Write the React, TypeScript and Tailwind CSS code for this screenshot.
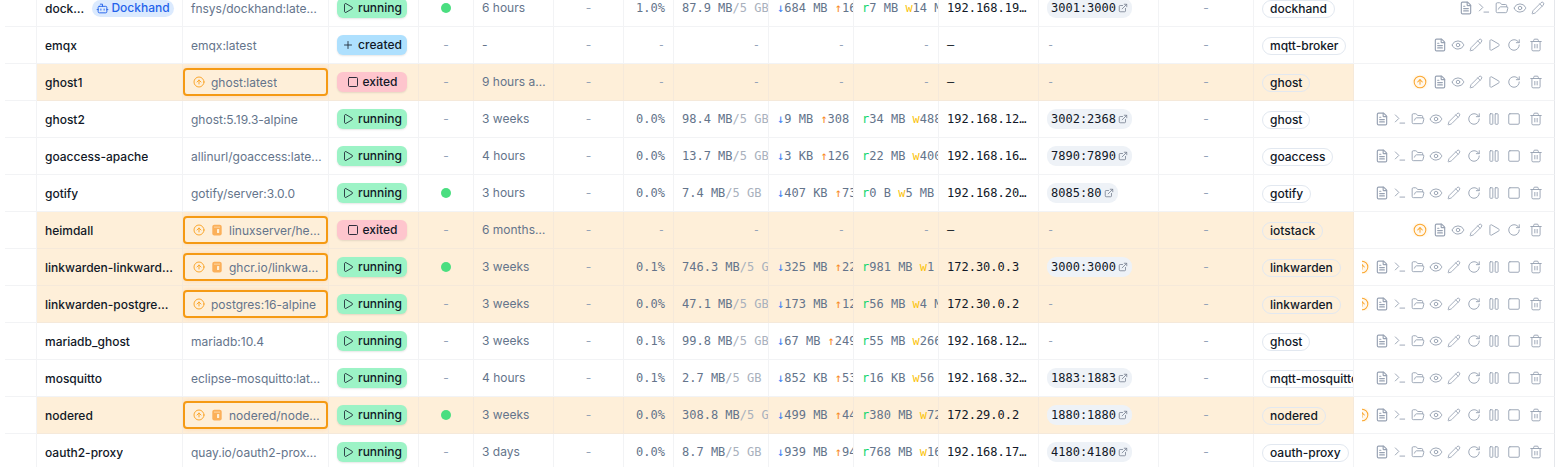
import { FileText, Terminal, FolderOpen, Eye, Pencil, RotateCw, Pause, Square, Trash2, Play, CircleArrowUp, ExternalLink, Plus, Bot } from "lucide-react";
import React from "react";

type Row = {
  name: string; dock?: boolean; image: string; update?: boolean; pin?: boolean; state: "running" | "created" | "exited";
  health?: boolean; uptime: string; cpu: string; mem?: string; down?: string; up?: string; r?: string; w?: string; ip: string; port?: string; stack: string; hl?: boolean;
};

const rows: Row[] = [
  { name: "dockhand", dock: true, image: "fnsys/dockhand:latest-amd64", state: "running", health: true, uptime: "6 hours", cpu: "1.0%", mem: "87.9 MB", down: "684 MB", up: "16 MB", r: "7 MB", w: "14 MB", ip: "192.168.192.2", port: "3001:3000", stack: "dockhand" },
  { name: "emqx", image: "emqx:latest", state: "created", uptime: "-", cpu: "-", ip: "—", stack: "mqtt-broker" },
  { name: "ghost1", image: "ghost:latest", update: true, state: "exited", uptime: "9 hours ago", cpu: "-", ip: "—", stack: "ghost", hl: true },
  { name: "ghost2", image: "ghost:5.19.3-alpine", state: "running", uptime: "3 weeks", cpu: "0.0%", mem: "98.4 MB", down: "9 MB", up: "308 MB", r: "34 MB", w: "488 MB", ip: "192.168.128.3", port: "3002:2368", stack: "ghost" },
  { name: "goaccess-apache", image: "allinurl/goaccess:latest-amd64", state: "running", uptime: "4 hours", cpu: "0.0%", mem: "13.7 MB", down: "3 KB", up: "126 B", r: "22 MB", w: "400 KB", ip: "192.168.160.2", port: "7890:7890", stack: "goaccess" },
  { name: "gotify", image: "gotify/server:3.0.0", state: "running", health: true, uptime: "3 hours", cpu: "0.0%", mem: "7.4 MB", down: "407 KB", up: "73 KB", r: "0 B", w: "5 MB", ip: "192.168.208.2", port: "8085:80", stack: "gotify" },
  { name: "heimdall", image: "linuxserver/heimdall:latest", update: true, pin: true, state: "exited", uptime: "6 months ago", cpu: "-", ip: "—", stack: "iotstack", hl: true },
  { name: "linkwarden-linkwarden-1", image: "ghcr.io/linkwarden/linkwarden", update: true, pin: true, state: "running", health: true, uptime: "3 weeks", cpu: "0.1%", mem: "746.3 MB", down: "325 MB", up: "22 MB", r: "981 MB", w: "1 GB", ip: "172.30.0.3", port: "3000:3000", stack: "linkwarden", hl: true },
  { name: "linkwarden-postgres-db-1", image: "postgres:16-alpine", update: true, state: "running", uptime: "3 weeks", cpu: "0.0%", mem: "47.1 MB", down: "173 MB", up: "12 MB", r: "56 MB", w: "4 MB", ip: "172.30.0.2", stack: "linkwarden", hl: true },
  { name: "mariadb_ghost", image: "mariadb:10.4", state: "running", uptime: "3 weeks", cpu: "0.1%", mem: "99.8 MB", down: "67 MB", up: "249 MB", r: "55 MB", w: "266 MB", ip: "192.168.128.2", stack: "ghost" },
  { name: "mosquitto", image: "eclipse-mosquitto:latest", state: "running", uptime: "4 hours", cpu: "0.1%", mem: "2.7 MB", down: "852 KB", up: "53 KB", r: "16 KB", w: "56 KB", ip: "192.168.32.2", port: "1883:1883", stack: "mqtt-mosquitto" },
  { name: "nodered", image: "nodered/node-red:latest", update: true, pin: true, state: "running", health: true, uptime: "3 weeks", cpu: "0.0%", mem: "308.8 MB", down: "499 MB", up: "44 MB", r: "380 MB", w: "72 MB", ip: "172.29.0.2", port: "1880:1880", stack: "nodered", hl: true },
  { name: "oauth2-proxy", image: "quay.io/oauth2-proxy/oauth2-proxy", state: "running", uptime: "3 days", cpu: "0.0%", mem: "8.7 MB", down: "939 MB", up: "94 MB", r: "768 MB", w: "16 MB", ip: "192.168.176.2", port: "4180:4180", stack: "oauth-proxy" },
];

const mono = "font-['DejaVu_Sans_Mono',monospace]";
const base = "border-b border-r align-middle p-0 overflow-hidden whitespace-nowrap";
const Dash = ({ right }: { right?: boolean }) => (
  <span className={`block text-[#94a3b8] text-xs ${right ? "text-right pr-2" : "text-center"}`}>-</span>
);

function StateBadge({ state }: { state: Row["state"] }) {
  const cfg = {
    running: { bg: "bg-[#9cf3c6]", icon: <Play className="w-3 h-3 text-[#1f2937]" strokeWidth={1.75} /> },
    created: { bg: "bg-[#aee0fe]", icon: <Plus className="w-3 h-3 text-[#1f2937]" strokeWidth={1.75} /> },
    exited: { bg: "bg-[#fec5cd]", icon: <Square className="w-3 h-3 text-[#111827]" strokeWidth={1.75} /> },
  }[state];
  return (
    <span className={`flex items-center justify-center gap-1 w-[70px] h-5 rounded-md shadow-[0_1px_2px_rgba(0,0,0,0.1)] text-xs font-medium text-[#111827] ${cfg.bg}`}>
      {cfg.icon}
      {state}
    </span>
  );
}

function PinIcon() {
  return (
    <svg viewBox="0 0 12 12" className="w-3 h-3 shrink-0">
      <rect x="1.3" y="0.8" width="9.4" height="10.8" rx="2" fill="#fbb05a" />
      <rect x="3" y="2.6" width="6" height="1" fill="#fdd8a6" />
      <rect x="6" y="5" width="2.2" height="4" rx="0.5" fill="#fef0da" />
    </svg>
  );
}

function Actions({ row }: { row: Row }) {
  const cls = "w-3.5 h-3.5 shrink-0";
  const sw = 1.6;
  const running = row.state === "running";
  return (
    <div className={`flex items-center justify-end gap-1 ml-2 overflow-hidden text-[#98a2b3] ${row.dock ? "pr-[9px]" : "pr-[11px]"}`}>
      {row.update && (
        <span className="flex mr-[2px] rounded-full bg-[#fff8ee] shadow-[0_0_4px_#fff3e0]">
          <CircleArrowUp className={`${cls} text-[#fba72e]`} strokeWidth={1.75} />
        </span>
      )}
      <FileText className={cls} strokeWidth={2} />
      {running && <Terminal className={cls} strokeWidth={sw} />}
      {running && <FolderOpen className={cls} strokeWidth={sw} />}
      <Eye className={cls} strokeWidth={sw} />
      <Pencil className={cls} strokeWidth={1.5} />
      {!row.dock && !running && <Play className={cls} strokeWidth={sw} />}
      {!row.dock && <RotateCw className={`${cls} ml-[2px]`} strokeWidth={sw} />}
      {!row.dock && running && <Pause className={`${cls} ml-[2px]`} strokeWidth={sw} />}
      {!row.dock && running && <Square className={`${cls} ml-[2px]`} strokeWidth={sw} />}
      {!row.dock && <Trash2 className={`${cls} ml-1`} strokeWidth={sw} />}
    </div>
  );
}

function TableRow({ row }: { row: Row }) {
  const bg = row.hl ? "bg-[#feefd9] border-[#f5e9da]" : "bg-white border-[#f2f3f5]";
  const cell = `${base} ${bg}`;
  return (
    <tr className="h-[37px]">
      <td className={`${base} bg-white border-[#f2f3f5]`} />
      <td className={`${cell} pl-2 text-xs font-medium text-[#111827]`}>
        <div className="flex items-center gap-2 pr-2">
          <span className={`truncate pt-[2px] ${row.dock ? "w-[41px] shrink-0" : ""}`}>{row.name}</span>
          {row.dock && (
            <span className="flex items-center justify-center gap-[2px] w-[82px] shrink-0 h-[17px] -ml-[2px] rounded-full bg-[#dbeafe] text-[#2563eb]">
              <Bot className="w-[13px] h-[13px] shrink-0" strokeWidth={1.75} />
              Dockhand
            </span>
          )}
        </div>
      </td>
      <td className={`${cell} text-xs text-[#64748b]`}>
        {row.update ? (
          <div className="flex items-center gap-[6px] h-[28px] pl-2 pr-[6px] rounded border-2 border-[#f59a14] shadow-[0_0_5px_rgba(251,146,60,0.25)]">
            <CircleArrowUp className="w-3 h-3 shrink-0 text-[#fba72e]" strokeWidth={2} />
            {row.pin && <PinIcon />}
            <span className="truncate pt-[2px]">{row.image}</span>
          </div>
        ) : (
          <div className="truncate pl-2 pr-[6px] pt-[2px]">{row.image}</div>
        )}
      </td>
      <td className={`${cell} pl-2`}><StateBadge state={row.state} /></td>
      <td className={cell}>
        {row.health ? <span className="block w-[10px] h-[10px] mx-auto rounded-full bg-[#4ade80]" /> : <Dash />}
      </td>
      <td className={`${cell} pl-2 pr-[7px] text-xs text-[#64748b] truncate`}>{row.uptime}</td>
      <td className={cell}><Dash /></td>
      <td className={`${cell} pr-2 text-right text-xs text-[#64748b] ${mono}`}>{row.cpu === "-" ? <span className="text-[#94a3b8]">-</span> : row.cpu}</td>
      <td className={`${cell} pl-2 text-xs ${mono} text-[#64748b]`}>
        {row.mem ? <>{row.mem}<span className="text-[#a9b1bd]">/5 GB</span></> : <Dash right />}
      </td>
      <td className={`${cell} pl-2 text-xs ${mono} text-[#64748b]`}>
        {row.down ? <><span className="text-[#3b82f6]">↓</span>{row.down} <span className="text-[#f98a1f]">↑</span>{row.up}</> : <Dash right />}
      </td>
      <td className={`${cell} pl-2 text-xs ${mono} text-[#64748b]`}>
        {row.r ? <><span className="text-[#12d66f]">r</span>{row.r} <span className="text-[#fbc30a]">w</span>{row.w}</> : <Dash right />}
      </td>
      <td className={`${cell} pl-2 pr-2 text-xs text-[#111827] ${mono} truncate`}>{row.ip}</td>
      <td className={`${cell} pl-2 text-xs ${mono}`}>
        {row.port ? (
          <span className="inline-flex items-center gap-[2px] h-5 pl-1 pr-1 rounded-[9px] bg-[#eef2f7] text-[#111827]">
            {row.port}
            <ExternalLink className="w-[10px] h-[10px] text-[#7b8494]" strokeWidth={2} />
          </span>
        ) : <span className="text-[#94a3b8]">-</span>}
      </td>
      <td className={cell}><Dash /></td>
      <td className={`${cell} pl-2 text-xs font-medium text-[#111827]`}>
        <span className="inline-flex items-center h-[18px] mt-[2px] px-[7px] rounded-full border border-[#e2e8f0]">{row.stack}</span>
      </td>
      <td className={`${base} bg-white border-b-[#f2f3f5] border-r-[#e5e7eb]`}><Actions row={row} /></td>
    </tr>
  );
}

const widths = [32, 146, 146, 90, 55, 80, 70, 50, 95, 85, 85, 100, 120, 95, 100, 201];

export default function App() {
  return (
    <div className="h-[467px] overflow-hidden bg-white font-['Inter',sans-serif]">
      <table className="table-fixed border-separate border-spacing-0 w-[1550px] -mt-[10px] ml-[5px]">
        <colgroup>
          {widths.map((w, i) => <col key={i} style={{ width: w }} />)}
        </colgroup>
        <tbody>
          {rows.map((r) => <TableRow key={r.name} row={r} />)}
        </tbody>
      </table>
    </div>
  );
}
